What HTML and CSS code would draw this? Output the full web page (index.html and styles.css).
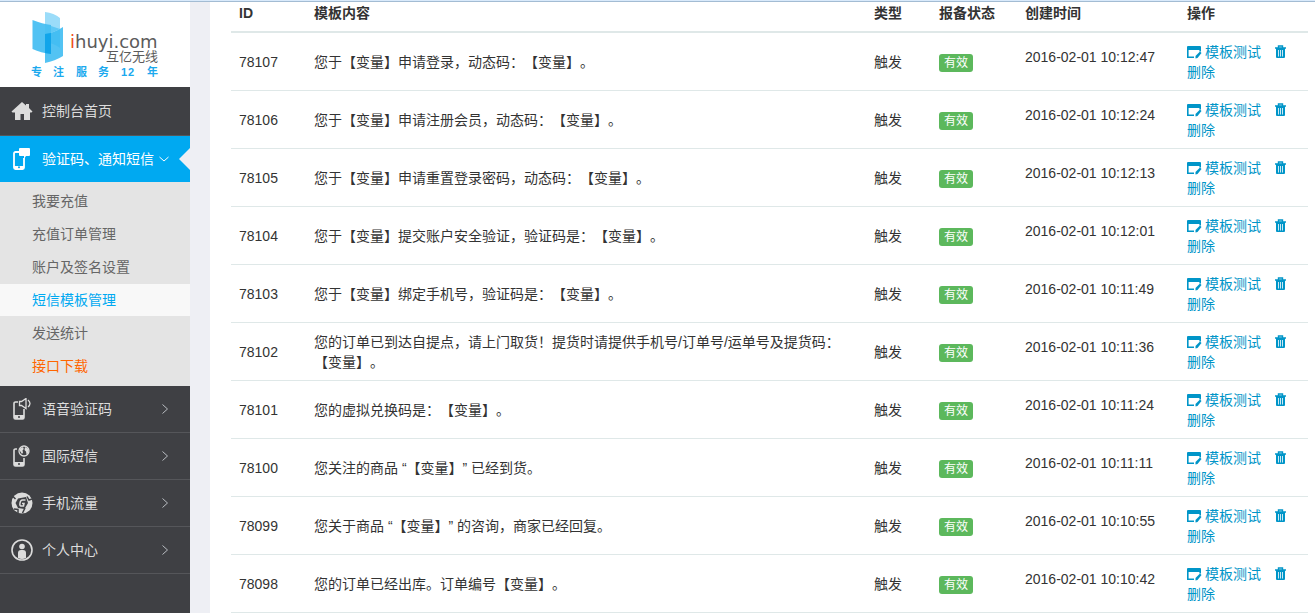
FILE: index.html
```html
<!DOCTYPE html>
<html lang="zh-CN">
<head>
<meta charset="UTF-8">
<meta name="viewport" content="width=device-width, initial-scale=1.0">
<title>短信模板管理</title>
<link rel="stylesheet" href="styles.css">
</head>
<body>

<!-- shared icons -->
<svg class="defs" width="0" height="0">
    <symbol id="icon-test" viewBox="0 0 16 14">
        <path d="M1 1h12q1 0 1 1v3H0V2q0-1 1-1z" fill="currentColor"/>
        <path d="M.8 4v8.200H7M13.200 4v2.500" fill="none" stroke="currentColor" stroke-width="1.600"/>
        <path d="M8.500 13.500V11l4.500-4.500 1.500 1.500L10.500 13z" fill="currentColor"/>
    </symbol>
    <symbol id="icon-trash" viewBox="0 0 12 14">
        <path d="M3.500 2.500V1h4v1.500M0 3h11" fill="none" stroke="currentColor" stroke-width="1.400"/>
        <path d="M1 3h9v9q0 1-1 1H2q-1 0-1-1z" fill="currentColor"/>
        <path d="M3.500 5v6.500M5.500 5v6.500M7.500 5v6.500" stroke="#fff" stroke-width=".8"/>
    </symbol>
    <symbol id="icon-right" viewBox="0 0 8 12">
        <path d="M1.500 1.500L6.500 6l-5 4.500" fill="none" stroke="currentColor"/>
    </symbol>
</svg>

<div class="topline"></div>
<div class="container">
    <nav class="sidebar">
        <a href="#" class="logo">
            <svg width="190" height="85" viewBox="0 0 190 85">
                <path d="M45 10q9 1 15 6v30q-7-5-15-6z" fill="#9bdcf9"/>
                <path d="M32.500 18q10 4 18.500 5v29q-10-1-18.500-5z" fill="#42bdf2" fill-opacity=".92"/>
                <path d="M63 25v29q-8 5-18 7V32q9-1 18-7z" fill="#35b8f1" fill-opacity=".85"/>
                <path d="M45 32l6-1v21l-6-1z" fill="#11a5ea"/>
                <path d="M51 24l9 3-9 4z" fill="#5fc8f5"/>
                <text class="logo-name" x="70" y="46"><tspan class="logo-i">i</tspan>huyi.com</text>
                <text class="logo-cn" x="106" y="59">互亿无线</text>
                <text class="logo-tag" x="31 53 76 98 121 128 147" y="74">专注服务12年</text>
            </svg>
        </a>
        <a href="#" class="menu home">
            <svg width="22" height="22" viewBox="0 0 22 22">
                <path d="M11 2l4 3.500V4h3v4l3.500 3.500-1 1H19V20h-6v-6H9.500v6H4v-7.500H1.500l-1-1z" fill="currentColor"/>
            </svg>
            <span>控制台首页</span>
        </a>
        <a href="#" class="menu active">
            <svg width="22" height="22" viewBox="0 0 22 22">
                <path d="M8 4H4.500A1.500 1.500 0 0 0 3 5.500v14A1.500 1.500 0 0 0 4.500 21h7a1.500 1.500 0 0 0 1.500-1.500V10" fill="none" stroke="currentColor" stroke-width="1.800"/>
                <path d="M3 18h10v3H3z" fill="currentColor"/>
                <path d="M9 0h9q1 0 1 1v6q0 1-1 1h-3l-2 3V8H9q-1 0-1-1V1q0-1 1-1z" fill="currentColor"/>
                <circle cx="8" cy="19.300" r="1" fill="#00a9f1"/>
            </svg>
            <span>验证码、通知短信</span>
            <svg class="down" width="12" height="8" viewBox="0 0 12 8">
                <path d="M1.500 2L6 6l4.500-4" fill="none" stroke="currentColor"/>
            </svg>
        </a>
        <div class="submenu">
            <a href="#">我要充值</a>
            <a href="#">充值订单管理</a>
            <a href="#">账户及签名设置</a>
            <a href="#" class="current">短信模板管理</a>
            <a href="#">发送统计</a>
            <a href="#" class="download">接口下载</a>
        </div>
        <a href="#" class="menu">
            <svg width="22" height="22" viewBox="0 0 22 22">
                <path d="M7 4H4.500A1.500 1.500 0 0 0 3 5.500v14A1.500 1.500 0 0 0 4.500 21h7a1.500 1.500 0 0 0 1.500-1.500V11" fill="none" stroke="currentColor" stroke-width="1.600"/>
                <path d="M3 17h10v4H3z" fill="currentColor"/>
                <path d="M8.500 3.500h2L15 .5v10l-4.500-3h-2zM17 2q4 3.500 0 7" fill="none" stroke="currentColor" stroke-width="1.300"/>
                <path d="M7 19h2" stroke="#3f4044" stroke-width="1.500"/>
            </svg>
            <span>语音验证码</span>
            <svg class="right" width="8" height="12"><use href="#icon-right"/></svg>
        </a>
        <a href="#" class="menu">
            <svg width="22" height="22" viewBox="0 0 22 22">
                <path d="M6 4H4.500A1.500 1.500 0 0 0 3 5.500v14A1.500 1.500 0 0 0 4.500 21h7a1.500 1.500 0 0 0 1.500-1.500V13" fill="none" stroke="currentColor" stroke-width="1.600"/>
                <path d="M3 17h10v4H3z" fill="currentColor"/>
                <circle cx="13" cy="6" r="5" fill="#3f4044" stroke="currentColor" stroke-width="1.300"/>
                <path d="M9 3.500l3-1.500.8 2-1.300 1.500.5 2-1 1.500-2-3zM14 2l3.500 2v4l-2 1.500-.5-3-1.500-1.500z" fill="currentColor"/>
                <path d="M7 19h2" stroke="#3f4044" stroke-width="1.500"/>
            </svg>
            <span>国际短信</span>
            <svg class="right" width="8" height="12"><use href="#icon-right"/></svg>
        </a>
        <a href="#" class="menu">
            <svg width="22" height="22" viewBox="0 0 22 22">
                <circle cx="11" cy="11" r="10.500" fill="currentColor"/>
                <path d="M7 6.500l8-1.500 2 6-3.500 6-6.500-1-2.500-5z" fill="#3f4044"/>
                <path d="M2 4.500l2.500 2.500M16 4.500l2 3.500 3-1M3 17l4 .5v4M14 16l-2.500 5" fill="none" stroke="#3f4044" stroke-width="1.500"/>
                <path d="M14.500 8h-3q-2 0-2.500 3t1 3h2.500l.5-2.500h-2" fill="none" stroke="currentColor" stroke-width="1.500"/>
            </svg>
            <span>手机流量</span>
            <svg class="right" width="8" height="12"><use href="#icon-right"/></svg>
        </a>
        <a href="#" class="menu">
            <svg width="22" height="22" viewBox="0 0 22 22">
                <circle cx="11" cy="11" r="10" fill="none" stroke="currentColor" stroke-width="1.600"/>
                <circle cx="11" cy="7.500" r="2.800" fill="currentColor"/>
                <path d="M7 19v-5q0-3 3-3h2q3 0 3 3v5q-4 2-8 0z" fill="currentColor"/>
            </svg>
            <span>个人中心</span>
            <svg class="right" width="8" height="12"><use href="#icon-right"/></svg>
        </a>
    </nav>

    <main class="content">
        <table class="table">
            <colgroup>
                <col class="col-id">
                <col>
                <col class="col-type">
                <col class="col-status">
                <col class="col-time">
                <col class="col-action">
            </colgroup>
            <thead>
                <tr>
                    <th>ID</th>
                    <th>模板内容</th>
                    <th>类型</th>
                    <th>报备状态</th>
                    <th>创建时间</th>
                    <th>操作</th>
                </tr>
            </thead>
            <tbody>
                <tr>
                    <td>78107</td>
                    <td>您于【变量】申请登录，动态码：【变量】。</td>
                    <td>触发</td>
                    <td><span class="label">有效</span></td>
                    <td><p>2016-02-01 10:12:47</p></td>
                    <td><a href="#" class="test"><svg width="16" height="14"><use href="#icon-test"/></svg>模板测试</a> <a href="#"><svg width="12" height="14"><use href="#icon-trash"/></svg> 删除</a></td>
                </tr>
                <tr>
                    <td>78106</td>
                    <td>您于【变量】申请注册会员，动态码：【变量】。</td>
                    <td>触发</td>
                    <td><span class="label">有效</span></td>
                    <td><p>2016-02-01 10:12:24</p></td>
                    <td><a href="#" class="test"><svg width="16" height="14"><use href="#icon-test"/></svg>模板测试</a> <a href="#"><svg width="12" height="14"><use href="#icon-trash"/></svg> 删除</a></td>
                </tr>
                <tr>
                    <td>78105</td>
                    <td>您于【变量】申请重置登录密码，动态码：【变量】。</td>
                    <td>触发</td>
                    <td><span class="label">有效</span></td>
                    <td><p>2016-02-01 10:12:13</p></td>
                    <td><a href="#" class="test"><svg width="16" height="14"><use href="#icon-test"/></svg>模板测试</a> <a href="#"><svg width="12" height="14"><use href="#icon-trash"/></svg> 删除</a></td>
                </tr>
                <tr>
                    <td>78104</td>
                    <td>您于【变量】提交账户安全验证，验证码是：【变量】。</td>
                    <td>触发</td>
                    <td><span class="label">有效</span></td>
                    <td><p>2016-02-01 10:12:01</p></td>
                    <td><a href="#" class="test"><svg width="16" height="14"><use href="#icon-test"/></svg>模板测试</a> <a href="#"><svg width="12" height="14"><use href="#icon-trash"/></svg> 删除</a></td>
                </tr>
                <tr>
                    <td>78103</td>
                    <td>您于【变量】绑定手机号，验证码是：【变量】。</td>
                    <td>触发</td>
                    <td><span class="label">有效</span></td>
                    <td><p>2016-02-01 10:11:49</p></td>
                    <td><a href="#" class="test"><svg width="16" height="14"><use href="#icon-test"/></svg>模板测试</a> <a href="#"><svg width="12" height="14"><use href="#icon-trash"/></svg> 删除</a></td>
                </tr>
                <tr>
                    <td>78102</td>
                    <td>您的订单已到达自提点，请上门取货！提货时请提供手机号/订单号/运单号及提货码：【变量】。</td>
                    <td>触发</td>
                    <td><span class="label">有效</span></td>
                    <td><p>2016-02-01 10:11:36</p></td>
                    <td><a href="#" class="test"><svg width="16" height="14"><use href="#icon-test"/></svg>模板测试</a> <a href="#"><svg width="12" height="14"><use href="#icon-trash"/></svg> 删除</a></td>
                </tr>
                <tr>
                    <td>78101</td>
                    <td>您的虚拟兑换码是：【变量】。</td>
                    <td>触发</td>
                    <td><span class="label">有效</span></td>
                    <td><p>2016-02-01 10:11:24</p></td>
                    <td><a href="#" class="test"><svg width="16" height="14"><use href="#icon-test"/></svg>模板测试</a> <a href="#"><svg width="12" height="14"><use href="#icon-trash"/></svg> 删除</a></td>
                </tr>
                <tr>
                    <td>78100</td>
                    <td>您关注的商品 “【变量】” 已经到货。</td>
                    <td>触发</td>
                    <td><span class="label">有效</span></td>
                    <td><p>2016-02-01 10:11:11</p></td>
                    <td><a href="#" class="test"><svg width="16" height="14"><use href="#icon-test"/></svg>模板测试</a> <a href="#"><svg width="12" height="14"><use href="#icon-trash"/></svg> 删除</a></td>
                </tr>
                <tr>
                    <td>78099</td>
                    <td>您关于商品 “【变量】” 的咨询，商家已经回复。</td>
                    <td>触发</td>
                    <td><span class="label">有效</span></td>
                    <td><p>2016-02-01 10:10:55</p></td>
                    <td><a href="#" class="test"><svg width="16" height="14"><use href="#icon-test"/></svg>模板测试</a> <a href="#"><svg width="12" height="14"><use href="#icon-trash"/></svg> 删除</a></td>
                </tr>
                <tr>
                    <td>78098</td>
                    <td>您的订单已经出库。订单编号【变量】。</td>
                    <td>触发</td>
                    <td><span class="label">有效</span></td>
                    <td><p>2016-02-01 10:10:42</p></td>
                    <td><a href="#" class="test"><svg width="16" height="14"><use href="#icon-test"/></svg>模板测试</a> <a href="#"><svg width="12" height="14"><use href="#icon-trash"/></svg> 删除</a></td>
                </tr>
            </tbody>
        </table>
    </main>
</div>

</body>
</html>
```
FILE: styles.css
```css
* {
    box-sizing: border-box;
}
body {
    margin: 0;
    font-family: "Liberation Sans", "Noto Sans CJK SC", sans-serif;
    font-size: 14px;
    line-height: 20px;
    color: #333;
    background-color: #fff;
    text-spacing-trim: space-all;
}
a {
    color: #0095c8;
    text-decoration: none;
}
.defs {
    position: absolute;
}
.topline {
    height: 2px;
    background-color: #d9eafb;
    border-bottom: 1px solid #a3bcd3;
}
.container {
    display: flex;
    min-height: calc(100vh - 2px);
}

/* sidebar */
.sidebar {
    width: 190px;
    flex-shrink: 0;
    background-color: #3f4044;
}
.logo {
    display: block;
    height: 85px;
    background-color: #fff;
}
.logo svg {
    display: block;
}
.logo-name {
    font-family: "DejaVu Sans", sans-serif;
    font-size: 18px;
    fill: #5b5b5b;
}
.logo-i {
    fill: #f04e23;
}
.logo-cn {
    font-size: 13px;
    fill: #5b5b5b;
}
.logo-tag {
    font-size: 11px;
    font-weight: bold;
    fill: #1ba9ee;
}
.menu {
    display: flex;
    align-items: center;
    position: relative;
    height: 47px;
    padding-left: 11px;
    color: #dcdcdc;
    border-bottom: 1px solid #55565a;
}
.menu span {
    margin-left: 9px;
}
.home {
    height: 49px;
}
.active {
    height: 46px;
    color: #fff;
    background-color: #00a9f1;
    border-bottom: 0;
}
.active::after {
    content: "";
    position: absolute;
    right: 0;
    top: 12px;
    border: 11px solid transparent;
    border-left: 0;
    border-right-color: #eeeff4;
}
.down {
    margin-left: 4px;
}
.right {
    margin-left: auto;
    margin-right: 21px;
    color: #b9bdc2;
}
.submenu {
    display: flex;
    flex-direction: column;
    gap: 1px;
    padding: 3px 0 4px;
    background-color: #e4e4e4;
}
.submenu a {
    padding-left: 32px;
    line-height: 32px;
    color: #666;
}
.submenu .current {
    color: #00a9f1;
    background-color: #f8f8f8;
}
.submenu .download {
    color: #ff6600;
}

/* template list */
.content {
    flex: 1;
    padding-right: 7px;
    padding-left: 21px;
    border-left: 20px solid #eeeff4;
}
.table {
    width: 100%;
    table-layout: fixed;
    border-collapse: separate;
    border-spacing: 0;
}
.col-id {
    width: 75px;
}
.col-type {
    width: 65px;
}
.col-status {
    width: 86px;
}
.col-time {
    width: 162px;
}
.col-action {
    width: 129px;
}
.table th {
    padding: 1px 8px 8px;
    text-align: left;
    border-bottom: 2px solid #dfe8e8;
}
.table td {
    height: 58px;
    padding: 8px;
    vertical-align: middle;
    border-bottom: 1px solid #dfe8e8;
}
.table p {
    margin: 0 0 10px;
}
.table td svg {
    vertical-align: -2px;
}
.test {
    margin-right: 10px;
}
.test svg {
    margin-right: 2px;
}
.label {
    display: inline-block;
    padding: 0 5px;
    font-size: 12px;
    line-height: 18px;
    color: #fff;
    background-color: #5cb85c;
    border-radius: 3px;
}
```
